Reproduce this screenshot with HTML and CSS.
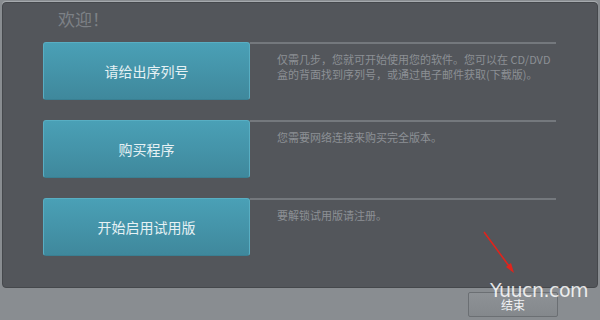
FILE: index.html
```html
<!DOCTYPE html>
<html lang="zh-CN">
<head>
  <meta charset="UTF-8">
  <title>欢迎</title>
  <link rel="stylesheet" href="styles.css">
</head>
<body>

<div class="window">
  <div class="panel">
    <div class="title">欢迎！</div>

    <div class="rows">
      <div class="row">
        <div class="big-btn">请给出序列号</div>
        <div class="info">仅需几步，您就可开始使用您的软件。您可以在 CD/DVD<br>盒的背面找到序列号，或通过电子邮件获取(下载版)。</div>
      </div>
      <div class="row">
        <div class="big-btn">购买程序</div>
        <div class="info">您需要网络连接来购买完全版本。</div>
      </div>
      <div class="row">
        <div class="big-btn">开始启用试用版</div>
        <div class="info">要解锁试用版请注册。</div>
      </div>
    </div>
  </div>

  <div class="footer">
    <div class="end-btn">结束</div>
  </div>

  <svg class="arrow" width="60" height="70" viewBox="0 0 60 70">
    <line x1="4" y1="2" x2="32" y2="40" stroke="#e0241c" stroke-width="1.6"/>
    <polygon points="34,43 26,37 31,33" fill="#e0241c"/>
  </svg>
  <div class="mark">Yuucn.com</div>
</div>

</body>
</html>
```

FILE: styles.css
```css
body {
  margin: 0;
  font-family: "Noto Sans CJK SC", "Noto Sans", sans-serif;
  background-color: #9a9ea2;
}
.window {
  position: relative;
  width: 600px;
  height: 320px;
  overflow: hidden;
  background-color: #898d91;
}
.panel {
  margin: 2px 2px 0 2px;
  height: 286px;
  box-sizing: border-box;
  background-color: #53565b;
  border: 1px solid #45484c;
  border-radius: 4px;
  box-shadow: 0 -1px 0 #a6aaae;
}
.title {
  height: 39px;
  padding-left: 55px;
  font-size: 17px;
  line-height: 32px;
  color: #7d8186;
}
.rows {
  display: flex;
  flex-direction: column;
  gap: 20px;
}
.row {
  display: flex;
  padding-left: 40px;
  padding-right: 41px;
}
.big-btn {
  width: 207px;
  height: 58px;
  box-sizing: border-box;
  display: flex;
  align-items: center;
  justify-content: center;
  background: linear-gradient(#4aa0b6, #3f889c);
  border: 1px solid #58aec3;
  border-bottom-color: #3a7f92;
  border-radius: 3px;
  color: #e6f1f4;
  font-size: 14px;
}
.info {
  flex: 1;
  border-top: 2px solid #74787d;
  padding: 8px 0 0 27px;
  font-size: 11px;
  line-height: 15px;
  color: #8c9095;
  white-space: nowrap;
}
.footer {
  display: flex;
  justify-content: flex-end;
  padding: 4px 42px 0 0;
}
.end-btn {
  width: 90px;
  height: 25px;
  box-sizing: border-box;
  display: flex;
  align-items: center;
  justify-content: center;
  background: linear-gradient(#8e9296, #84888c);
  border: 1px solid #6b6f73;
  border-radius: 2px;
  color: #f0f2f4;
  font-size: 12px;
}
.arrow {
  position: absolute;
  left: 480px;
  top: 230px;
}
.mark {
  position: absolute;
  left: 490px;
  top: 279px;
  font-family: "DejaVu Sans", sans-serif;
  font-size: 19px;
  color: rgba(255, 255, 255, 0.85);
  letter-spacing: -0.5px;
}
```
